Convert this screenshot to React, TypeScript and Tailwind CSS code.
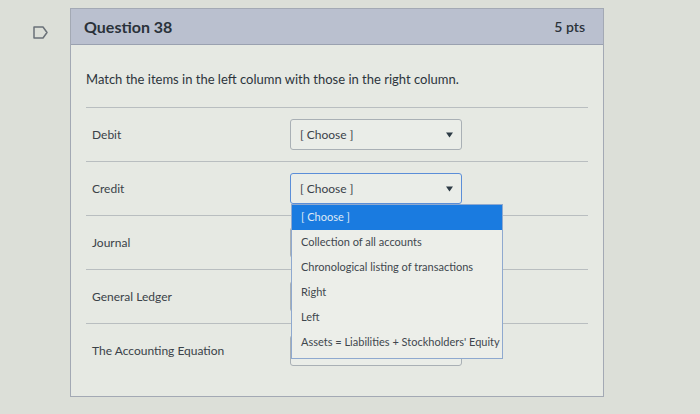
import React from "react";

const rows = ["Debit", "Credit", "Journal", "General Ledger", "The Accounting Equation"];
const options = [
  "[ Choose ]",
  "Collection of all accounts",
  "Chronological listing of transactions",
  "Right",
  "Left",
  "Assets = Liabilities + Stockholders' Equity",
];

function Caret() {
  return (
    <svg width="7" height="6" viewBox="0 0 7 6" className="block">
      <path d="M0 0.5 L7 0.5 L3.5 5.5 Z" fill="#2d3b45" />
    </svg>
  );
}

function Select({ focused, hidden }: { focused?: boolean; hidden?: boolean }) {
  return (
    <div
      className={`flex h-[31px] w-[172px] items-center justify-between rounded-[3px] border bg-[#eaede8] pl-[9px] pr-[8px] ${
        focused ? "border-[#5b8ed8]" : "border-[#a9b0b5]"
      }`}
    >
      {!hidden && <span className="text-[12px] text-[#3a4248]">[ Choose ]</span>}
      {!hidden && <Caret />}
    </div>
  );
}

export default function App() {
  return (
    <div
      className="h-[414px] w-[700px] overflow-hidden bg-[#dcdfd8] pt-[8px]"
      style={{ fontFamily: "Lato, 'Open Sans', sans-serif" }}
    >
      <div className="flex items-start pl-[33px]">
        <div className="mt-[18px] w-[14px]">
          <svg width="15" height="13" viewBox="0 0 15 13">
            <path d="M1 1 H10 L14 6.5 L10 12 H1 Z" fill="none" stroke="#6a7178" strokeWidth="1.5" strokeLinejoin="round" />
          </svg>
        </div>
        <div className="ml-[23px] w-[534px] border border-[#a3a9b4] bg-[#e6e9e3]">
          <div className="flex h-[36px] items-center justify-between border-b border-[#9aa1b0] bg-[#bac0cf] pl-[13px] pr-[18px]">
            <span className="text-[16px] font-bold text-[#2a323a]">Question 38</span>
            <span className="text-[14px] font-semibold text-[#2a323a]">5 pts</span>
          </div>
          <div className="px-[15px] pb-[19px] pt-[24px]">
            <p className="h-[20px] text-[13px] leading-[20px] text-[#2d353c]">
              Match the items in the left column with those in the right column.
            </p>
            <div className="mt-[18px]">
              {rows.map((r, i) => (
                <div key={r} className="relative flex h-[54px] items-center border-t border-[#b9bec0]">
                  <span className="w-[204px] pl-[6px] text-[12px] text-[#3a4248]">{r}</span>
                  <Select focused={i === 1} hidden={i > 1} />
                  {i === 1 && (
                    <div className="absolute left-[205px] top-[42px] z-10 w-[212px] border border-[#8fa9cf] bg-[#eceee9] pb-[3px]">
                      {options.map((o, j) => (
                        <div
                          key={o}
                          className={`flex h-[25px] items-center whitespace-nowrap pl-[9px] text-[11px] ${
                            j === 0 ? "bg-[#1a7be0] text-[#dfe9f5]" : "text-[#3f474e]"
                          }`}
                        >
                          {o}
                        </div>
                      ))}
                    </div>
                  )}
                </div>
              ))}
            </div>
          </div>
        </div>
      </div>
    </div>
  );
}
